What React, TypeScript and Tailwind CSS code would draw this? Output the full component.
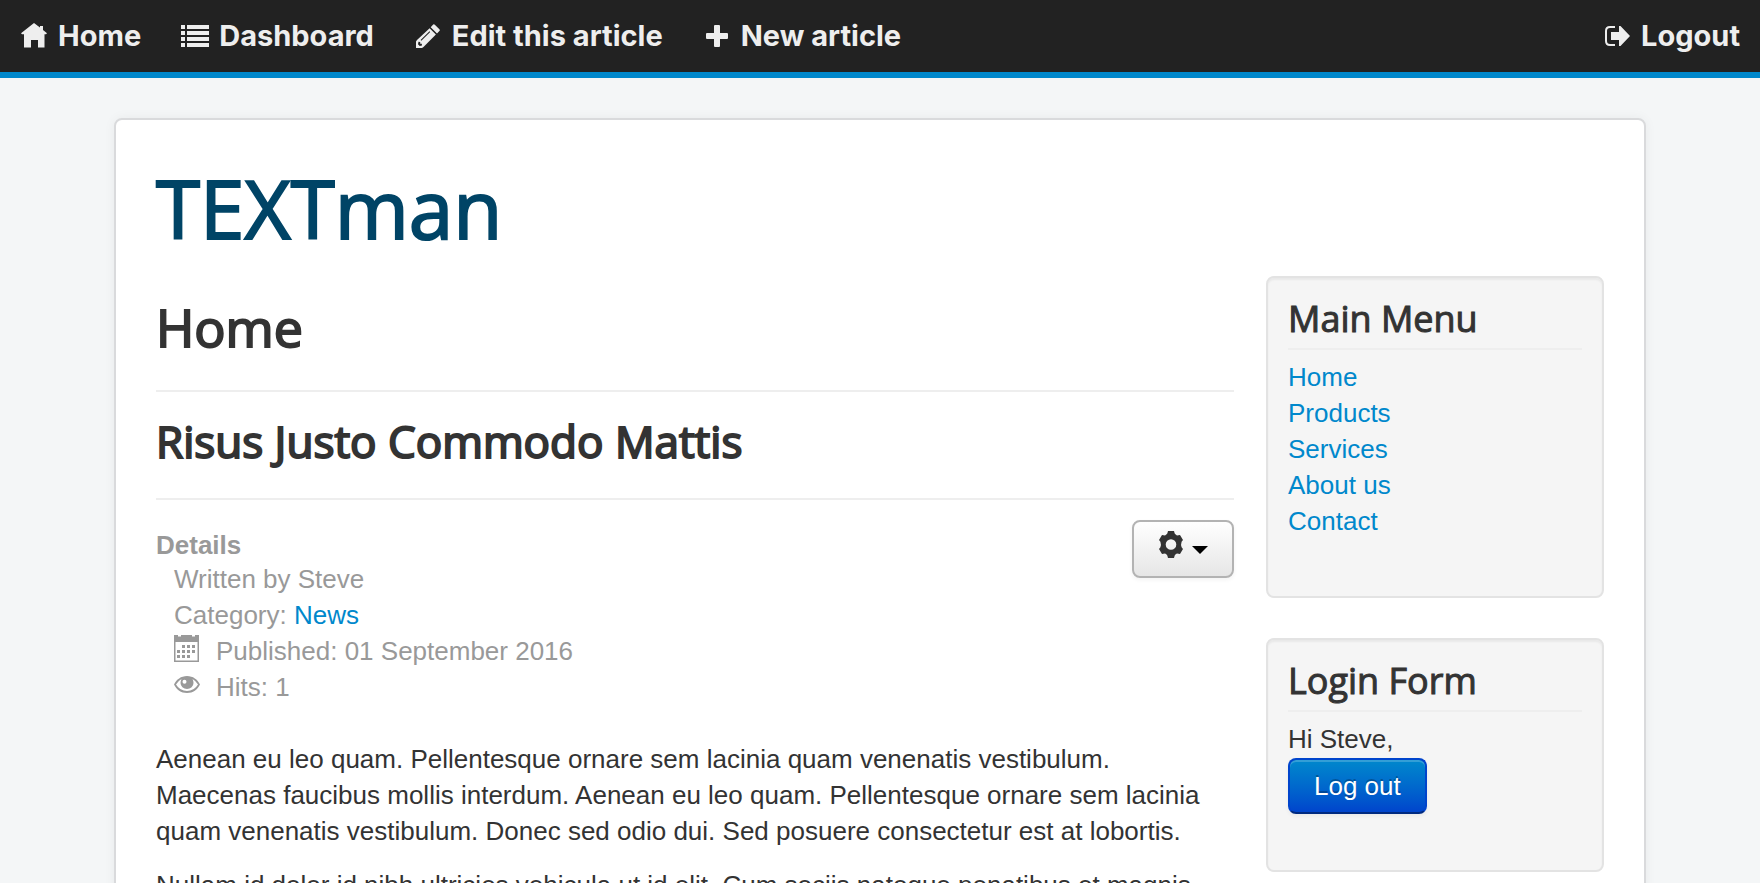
import { ReactNode } from "react";

interface NavItemProps {
  icon: ReactNode;
  label: string;
}

interface ModuleProps {
  title: string;
  children: ReactNode;
}

const HomeIcon = () => (
  <svg width="26" height="26" viewBox="0 0 26 26" fill="currentColor">
    <path d="M13 0 19 4.6V3h3v4l4 3.2-1 1H23.500V24.500H17V17H10v7.500H3V11.200H1L0 10.200Z" />
  </svg>
);

const ListIcon = () => (
  <svg width="28" height="24" viewBox="0 0 28 24" fill="currentColor">
    {[1, 7, 13, 19].map((y) => (
      <g key={y}>
        <rect x="0" y={y} width="4" height="4" />
        <rect x="6" y={y} width="22" height="4" />
      </g>
    ))}
  </svg>
);

const PencilIcon = () => (
  <svg width="24" height="24" viewBox="0 0 24 24" fill="currentColor">
    <path d="M17.200 0.600Q18 0 18.800 0.700L23.400 5.300Q24.200 6.200 23.400 7L21 9.500 14.700 3.200Z" />
    <path
      fillRule="evenodd"
      d="M13.600 4.200 19.900 10.500 7.500 23 6 24H0V17.500L1 16ZM13.500 7.200 4.600 16 5.300 16.700 14.200 7.900ZM2.500 17.800 2 20.300 3.700 22 6 21.500 5.800 19.700H4.200V18Z"
    />
  </svg>
);

const PlusIcon = () => (
  <svg width="22" height="22" viewBox="0 0 22 22" fill="currentColor">
    <path d="M9 0h4q1 0 1 1v7h7q1 0 1 1v4q0 1-1 1h-7v7q0 1-1 1H9q-1 0-1-1v-7H1q-1 0-1-1V9q0-1 1-1h7V1q0-1 1-1Z" />
  </svg>
);

const LogoutIcon = () => (
  <svg width="25" height="22" viewBox="0 0 25 22" fill="currentColor">
    <path
      d="M10 2H5Q1 2 1 6V16Q1 20 5 20H10"
      fill="none"
      stroke="currentColor"
      strokeWidth="2"
    />
    <path d="M6 7H14V1H15.500L25 11 15.500 21H14V15H6Z" />
  </svg>
);

const GearIcon = () => (
  <svg width="26" height="27" viewBox="0 0 26 27" fill="currentColor">
    <path
      fillRule="evenodd"
      d="M10 0H16L16.700 2.600Q17.500 3.900 19 4.400L22 4 25 9 23.600 10.700Q22.600 13.500 23.600 16.300L25 18 22 23 19 22.600Q17.500 23.100 16.700 24.400L16 27H10L9.300 24.400Q8.500 23.100 7 22.600L4 23 1 18 2.400 16.300Q3.400 13.500 2.400 10.700L1 9 4 4 7 4.400Q8.500 3.900 9.300 2.600ZM13 8.200a5.300 5.300 0 1 0 0 10.600 5.300 5.300 0 0 0 0-10.600Z"
    />
  </svg>
);

const CalendarIcon = () => (
  <svg width="25" height="27" viewBox="0 0 25 27" fill="currentColor">
    <path
      fillRule="evenodd"
      d="M0 0H4V1.500H7V0H18V1.500H21V0H25V27H0ZM1.500 7V25.500H23.500V7Z"
    />
    <path d="M8 10h3v3H8zM13 10h3v3h-3zM18 10h3v3h-3zM3 15h3v3H3zM8 15h3v3H8zM13 15h3v3h-3zM18 15h3v3h-3zM3 20h3v3H3zM8 20h3v3H8zM13 20h3v3h-3z" />
  </svg>
);

const EyeIcon = () => (
  <svg width="26" height="17" viewBox="0 0 26 17" fill="currentColor">
    <path
      fillRule="evenodd"
      d="M13 0C19 0 23.500 3.500 26 8.500 23.500 13.500 19 17 13 17S2.500 13.500 0 8.500C2.500 3.500 7 0 13 0ZM7.500 3Q4 5 2 8.500 6 15 13 15T24 8.500Q22 5 18.500 3 19.500 5 19.500 7A6.500 6 0 0 1 6.500 7Q6.500 5 7.500 3ZM10.500 3.700A2 2 0 1 0 10.500 7.700 2 2 0 0 0 10.500 3.700Z"
    />
  </svg>
);

const NavItem = ({ icon, label }: NavItemProps) => (
  <a href="#" className="flex items-center hover:text-white">
    <span className="mr-2.5 flex w-7 justify-center">{icon}</span>
    {label}
  </a>
);

const Module = ({ title, children }: ModuleProps) => (
  <section className="mb-10 rounded-lg border-2 border-[#e3e3e3] bg-[#f5f5f5] p-5 shadow-[inset_0_2px_2px_rgba(0,0,0,0.05)]">
    <h3 className="mb-[9px] border-b-2 border-[#eeeeee] pb-2 font-['Open_Sans',sans-serif] text-[36px] leading-[42px] [-webkit-text-stroke:1px]">
      {title}
    </h3>
    {children}
  </section>
);

const menuLinks = ["Home", "Products", "Services", "About us", "Contact"];

const App = () => {
  return (
    <div className="h-screen overflow-hidden bg-[#f4f6f7] font-['Liberation_Sans',Arial,sans-serif] text-[26px] leading-9 text-[#333333]">
      {/* Toolbar */}
      <nav className="flex h-[78px] items-center gap-10 border-b-6 border-[#0088cc] bg-[#222222] px-5 font-['Inter',sans-serif] text-[29px] font-bold text-[#eeeeee]">
        <NavItem icon={<HomeIcon />} label="Home" />
        <NavItem icon={<ListIcon />} label="Dashboard" />
        <NavItem icon={<PencilIcon />} label="Edit this article" />
        <NavItem icon={<PlusIcon />} label="New article" />
        <div className="ml-auto">
          <NavItem icon={<LogoutIcon />} label="Logout" />
        </div>
      </nav>

      <div className="mx-auto mt-10 max-w-[1532px] rounded-lg border-2 border-[#d9dadc] bg-white px-10 pt-11 pb-10 shadow-[0_0_12px_rgba(0,0,0,0.05)]">
        {/* Header */}
        <header className="mb-6">
          <a
            href="#"
            className="block font-['Open_Sans',sans-serif] text-[80px] leading-[88px] text-[#004466] [-webkit-text-stroke:2px]"
          >
            TEXTman
          </a>
        </header>

        <div className="flex gap-8">
          {/* Article */}
          <main className="min-w-0 flex-1 pt-4">
            <h1 className="border-b-2 border-[#eeeeee] pb-7 font-['Open_Sans',sans-serif] text-[52px] leading-[70px] [-webkit-text-stroke:2px]">
              Home
            </h1>
            <h2 className="mt-5 border-b-2 border-[#eeeeee] pb-7 font-['Open_Sans',sans-serif] text-[44px] leading-[58px] [-webkit-text-stroke:2px]">
              Risus Justo Commodo Mattis
            </h2>

            <div className="mt-5 mb-9 flex items-start justify-between">
              <dl className="pt-[9px] text-[#999999]">
                <dt className="font-bold leading-8">Details</dt>
                <dd className="ml-[18px]">Written by Steve</dd>
                <dd className="ml-[18px]">
                  Category:{" "}
                  <a href="#" className="text-[#0088cc]">
                    News
                  </a>
                </dd>
                <dd className="ml-[18px] flex">
                  <span className="mr-4 w-[26px] pt-0.5">
                    <CalendarIcon />
                  </span>
                  Published: 01 September 2016
                </dd>
                <dd className="ml-[18px] flex">
                  <span className="mr-4 w-[26px] pt-[7px]">
                    <EyeIcon />
                  </span>
                  Hits: 1
                </dd>
              </dl>
              <button
                type="button"
                aria-label="Article options"
                className="flex h-[58px] w-[102px] justify-center gap-2 rounded-lg border-2 border-[#b3b3b3] bg-linear-to-b from-white to-[#e6e6e6] pt-[9px] shadow-[0_2px_4px_rgba(0,0,0,0.05)]"
              >
                <GearIcon />
                <svg width="16" height="8" viewBox="0 0 16 8" className="mt-[15px]">
                  <path d="M0 0H16L8 8Z" fill="#000000" />
                </svg>
              </button>
            </div>

            <p className="mb-[18px]">
              Aenean eu leo quam. Pellentesque ornare sem lacinia quam venenatis
              vestibulum. Maecenas faucibus mollis interdum. Aenean eu leo quam.
              Pellentesque ornare sem lacinia quam venenatis vestibulum. Donec
              sed odio dui. Sed posuere consectetur est at lobortis.
            </p>
            <p className="mb-[18px]">
              Nullam id dolor id nibh ultricies vehicula ut id elit. Cum sociis
              natoque penatibus et magnis
            </p>
          </main>

          {/* Sidebar */}
          <aside className="w-[338px] shrink-0">
            <Module title="Main Menu">
              <ul className="mb-[37px]">
                {menuLinks.map((link) => (
                  <li key={link}>
                    <a href="#" className="text-[#0088cc] hover:underline">
                      {link}
                    </a>
                  </li>
                ))}
              </ul>
            </Module>
            <Module title="Login Form">
              <p>Hi Steve,</p>
              <button
                type="button"
                className="mt-px mb-9 block rounded-lg border-2 border-[#0044cc] border-b-[#002a80] bg-linear-to-b from-[#0088cc] to-[#0044cc] px-6 py-2 text-white shadow-[inset_0_2px_0_rgba(255,255,255,0.2),0_2px_4px_rgba(0,0,0,0.05)] [text-shadow:0_-2px_0_rgba(0,0,0,0.25)]"
              >
                Log out
              </button>
            </Module>
          </aside>
        </div>
      </div>
    </div>
  );
};

export default App;
